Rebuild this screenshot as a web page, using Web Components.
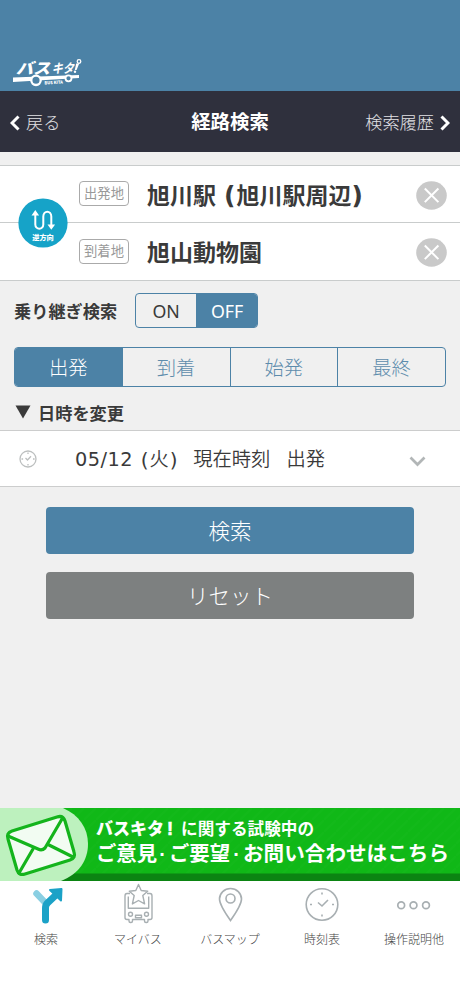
<!DOCTYPE html>
<html lang="ja">
<head>
<meta charset="utf-8">
<title>経路検索</title>
<style>
html,body{margin:0;height:100%}
body{font-family:"DejaVu Sans","Noto Sans CJK JP",sans-serif;background:#f0f0f0;color:#3a3a3a;overflow:hidden}
</style>
</head>
<body>
<route-app></route-app>
<script>
function define(name, html, setup) {
  const t = document.createElement('template');
  t.innerHTML = html;
  customElements.define(name, class extends HTMLElement {
    connectedCallback() {
      if (this.shadowRoot) return;
      this.attachShadow({mode:'open'}).appendChild(t.content.cloneNode(true));
      if (setup) setup(this, this.shadowRoot);
    }
  });
}

define('app-header', `
<style>:host{display:block;height:91px;background:#4c82a6;flex:none}
svg{display:block}</style>
<svg width="460" height="91" viewBox="0 0 460 91" fill="#fff">
<g font-family="Noto Sans CJK JP,sans-serif" font-weight="900">
<text transform="translate(16 73.5) skewX(-16)" font-size="15.5" textLength="34" lengthAdjust="spacingAndGlyphs">バス</text>
<text transform="translate(51.500 73) skewX(-16)" font-size="13" font-weight="700" textLength="22" lengthAdjust="spacingAndGlyphs">キタ</text>
<text transform="translate(44.5 84.5) rotate(-3)" font-size="4.2" textLength="18.5" lengthAdjust="spacingAndGlyphs">BUS KITA</text></g>
<path d="M13 77.500 79 75v3L13 82z"/>
<circle cx="36" cy="80.300" r="4.700" fill="#4c82a6" stroke="#fff" stroke-width="2.300"/>
<circle cx="68.500" cy="78.300" r="3" fill="#4c82a6" stroke="#fff" stroke-width="1.800"/>
<path d="M76.200 63.500h3l-2.600 6.500h-1.800z"/><circle cx="75" cy="71.800" r="1.200"/>
<circle cx="79" cy="61.500" r="1.800" fill="none" stroke="#fff" stroke-width="1.300"/>
</svg>`);

define('nav-bar', `
<style>:host{display:grid;grid-template-columns:1fr auto 1fr;align-items:center;height:61px;background:#2f303d;color:#e2e2e6;padding:2px 10px 0;flex:none;box-sizing:border-box}
div{display:flex;align-items:center;font-size:17.2px;font-weight:300;line-height:24px}
.r{justify-content:flex-end}h1{margin:0;font-size:19.4px;font-weight:700;color:#fff;line-height:28px}
svg{width:10px;height:16px;fill:none;stroke:#fff;stroke-width:3;margin-top:1px}.l svg{margin-right:6px}.r svg{margin-left:6px}</style>
<div class="l"><svg viewBox="0 0 10 16"><path d="M8.5 1.5 2 8l6.5 6.5"/></svg><slot name="back"></slot></div>
<h1><slot></slot></h1>
<div class="r"><slot name="next"></slot><svg viewBox="0 0 10 16"><path d="M1.5 1.5 8 8l-6.5 6.5"/></svg></div>`);

define('stop-row', `
<style>:host{display:flex;align-items:center;height:56px;padding:0 13px 0 79px}
:host([slot=to]){height:57px}
.tag{box-sizing:border-box;width:50px;height:25px;border:1.5px solid #aaa;border-radius:4px;color:#999;font-size:13.3px;line-height:24px;text-align:center;margin-top:-1px;white-space:nowrap}
.name{flex:1;margin-left:18px;font-weight:700;font-size:23px;line-height:30px;white-space:pre;margin-top:3px}
svg{width:31px;height:29px;margin-top:2px}</style>
<span class="tag"></span><span class="name"><slot></slot></span>
<svg viewBox="0 0 31 29"><ellipse cx="15.5" cy="14.5" rx="15.3" ry="14.2" fill="#c9c9c9"/><path d="m8.8 7.5 13.6 13.6M22.4 7.5 8.8 21.1" stroke="#fff" stroke-width="2"/></svg>`,
(el, r) => r.querySelector('.tag').textContent = el.getAttribute('tag'));

define('stop-panel', `
<style>:host{display:block;position:relative;background:#fff;border:solid #c9cccc;border-width:1px 0;flex:none}
.line{height:1px;background:#c9cccc}
svg{position:absolute;left:18px;top:32px}</style>
<slot name="from"></slot><div class="line"></div><slot name="to"></slot>
<svg width="50" height="50" viewBox="0 0 50 50"><circle cx="25" cy="25" r="24.6" fill="#16a3c8"/>
<g fill="none" stroke="#fff" stroke-width="2"><path d="M17.300 16v10.500c0 5.500 8 5.500 8 0V18.500c0-6.500 8-6.500 8 0V27"/></g>
<path d="M13.5 17.500 17.3 12l3.8 5.500zM29.5 26.500h7.600l-3.800 5.200z" fill="#fff"/>
<text x="25" y="42.300" text-anchor="middle" font-family="Noto Sans CJK JP,sans-serif" font-weight="900" font-size="7.200" fill="#fff">逆方向</text></svg>`);

define('seg-control', `
<style>:host{display:flex;box-sizing:border-box;border:1.5px solid #4c82a6;border-radius:4px;overflow:hidden}
span{flex:1;display:flex;align-items:center;justify-content:center;font-size:19.3px;font-weight:300;color:#5d8cac}
:host([plain]) span{font:400 17.8px "Noto Sans",sans-serif;color:#3a3a3a}
span+span{border-left:1px solid #4c82a6}
span.on,:host([plain]) span.on{background:#4c82a6;color:#fff}</style>`,
(el, r) => el.getAttribute('items').split(',').forEach((s, i) => {
  const n = document.createElement('span'); n.textContent = s;
  if (i === +el.getAttribute('active')) n.className = 'on';
  r.appendChild(n);
}));

define('date-row', `
<style>:host{display:flex;align-items:center;box-sizing:border-box;height:57px;background:#fff;border:solid #cccdcd;border-width:1px 0;padding:0 34px 0 19px;font-size:19.3px;flex:none}
.t{flex:1;display:flex;margin:3px 0 0 38px;line-height:28px;white-space:pre;font-weight:350}
svg{fill:none;stroke:#bcbfbf}</style>
<svg width="18" height="18" viewBox="0 0 18 18" stroke-width="1.3"><circle cx="9" cy="9" r="8"/><path d="m6.5 8 2 2L12 6.3M9 2.5v1.6M9 14v1.6M2.5 9h1.6M14 9h1.6"/></svg>
<span class="t"><slot></slot></span>
<svg width="17" height="11" viewBox="0 0 17 11" stroke-width="2.7" style="stroke:#b2b6b7;margin-top:5px"><path d="m1.5 1.5 7 7 7-7"/></svg>`);

define('action-button', `
<style>:host{display:flex;align-items:center;justify-content:center;height:47px;margin:0 46px;border-radius:4px;background:var(--fill);color:#fff;font-size:21.5px;font-weight:300;flex:none;box-sizing:border-box;padding-bottom:2px}</style><slot></slot>`);

define('contact-banner', `
<style>:host{display:block;height:73px;flex:none}svg{display:block}</style>
<svg width="460" height="73" viewBox="0 0 460 73">
<defs><pattern id="p" width="12" height="12" patternUnits="userSpaceOnUse"><path d="M0 12 12 0" stroke="#1cbd24" stroke-width="2"/></pattern></defs>
<path fill="#10b817" d="M0 0h460v73H0z"/><path fill="url(#p)" opacity=".25" d="M0 0h460v65H0z"/><path fill="#0b8412" d="M0 65.500h460V73H0z"/>
<path fill="#bdf1be" d="M0 0h63c16 7 25 20 25 36S79 66 61 73H0z"/>
<g stroke="#14b41c" stroke-width="3.200" stroke-linejoin="round" stroke-linecap="round" fill="#f2fcf2">
<path d="M12 23 57 9q6-2 8 4l9 31q2 6-4 8L25 66q-6 2-8-4L8 31q-2-6 4-8z"/>
<path fill="none" d="m8 28 30 13q4 2 7-1l17-29M33 41 19 65M49 37l24 12"/></g>
<g fill="#fff" font-family="Liberation Sans,Noto Sans CJK JP,sans-serif" font-weight="700">
<text x="96" y="27" font-size="17" font-weight="900" textLength="68" lengthAdjust="spacingAndGlyphs">バスキタ</text>
<text x="167" y="27" font-size="18" stroke="#fff" stroke-width=".7">!</text>
<text x="181" y="27" font-size="16.500" textLength="133" lengthAdjust="spacingAndGlyphs">に関する試験中の</text>
<text x="96" y="52.500" font-size="20.500" textLength="61" lengthAdjust="spacingAndGlyphs">ご意見</text>
<text x="162.700" y="52.500" font-size="20" text-anchor="middle">·</text>
<text x="169" y="52.500" font-size="20.500" textLength="61" lengthAdjust="spacingAndGlyphs">ご要望</text>
<text x="236.500" y="52.500" font-size="20" text-anchor="middle">·</text>
<text x="243" y="52.500" font-size="20.500" textLength="206" lengthAdjust="spacingAndGlyphs">お問い合わせはこちら</text></g></svg>`);

define('tab-item', `
<style>:host{flex:1 1 0;display:flex;flex-direction:column;align-items:center;font-size:12px;font-weight:300;color:#444;line-height:18px;white-space:nowrap}
::slotted(svg){display:block;width:44px;height:44px;fill:none;stroke:#a8afb2;stroke-width:1.6}
span{margin-top:6px}</style><slot name="icon"></slot><span><slot></slot></span>`);

define('tab-bar', `
<style>:host{display:flex;background:#fff;flex:1}</style>
<tab-item><svg slot="icon" viewBox="0 0 44 44"><path d="M12.500 12.500 22 22.500" stroke="#8acfe2" stroke-width="6.500" stroke-linecap="round"/><path d="M21.500 39V27q0-3 2-5l9.500-9" stroke="#1ba2c7" stroke-width="7" stroke-linecap="round"/><path d="m26 9 11.500-1L37 19.500z" fill="#1ba2c7" stroke="#1ba2c7" stroke-linejoin="round" stroke-width="2"/></svg>検索</tab-item>
<tab-item><svg slot="icon" viewBox="0 0 44 44" style="stroke-width:1.400"><g stroke-linejoin="round"><path d="m22.500 3.500 2.700 6 6.500.7-4.900 4.300 1.800 8.400-6.100-3.400-6.100 3.400 1.800-8.400-4.900-4.300 6.500-.7z"/><path d="M14 12.500h-3q-2 0-2 2.500v21.500q0 2 2 2h2v1.500q0 1.500 1.500 1.500h.5q1.500 0 1.500-1.500v-1.500h12v1.500q0 1.500 1.500 1.500h.5q1.500 0 1.500-1.500v-1.500h2q2 0 2-2V15q0-2.500-2-2.500h-3M12.300 15.500v11.700h20.400V15.500"/><circle cx="14.500" cy="33.300" r="2"/><circle cx="30.500" cy="33.300" r="2"/><path d="M19.500 34.300h6v2.500h-6z"/></g></svg>マイバス</tab-item>
<tab-item><svg slot="icon" viewBox="0 0 44 44"><path d="M22.500 39.500Q11.500 24 11.500 18a11 10.500 0 0 1 22 0q0 6-11 21.500z"/><circle cx="22.500" cy="17.500" r="4.500"/></svg>バスマップ</tab-item>
<tab-item><svg slot="icon" viewBox="0 0 44 44"><circle cx="22" cy="23.500" r="15.800"/><path d="m18 21.500 4 3.500 6-6M22 11.500v2M22 33.500v2M10 23.500h2M32 23.500h2"/></svg>時刻表</tab-item>
<tab-item><svg slot="icon" viewBox="0 0 44 44" style="stroke-width:1.700"><circle cx="9.200" cy="24.300" r="3.400"/><circle cx="21.500" cy="24.300" r="3.400"/><circle cx="34" cy="24.300" r="3.400"/></svg>操作説明他</tab-item>`);

define('route-app', `
<style>:host{display:flex;flex-direction:column;height:996px;width:460px}
stop-panel{margin-top:13px}
.transfer{display:flex;align-items:center;height:35px;margin:12px 14px 0;font-weight:700;font-size:17.2px}
.transfer>span{margin-top:-1px}
.transfer seg-control{width:123px;height:35px;margin-left:18px}
.types{height:40px;margin:19px 14px 0;flex:none}
.change{height:43px;display:flex;align-items:center;padding:7px 15px 0;font-weight:700;font-size:17.2px;box-sizing:border-box;flex:none}
.change svg{margin-right:7px}
.search{margin-top:19.5px;--fill:#4c82a6}.reset{margin-top:18px;--fill:#7d8080}
contact-banner{margin-top:189.5px}
.p{display:inline-block;text-align:center;font-weight:inherit}
stop-row .p{width:12.500px;font-size:25px;text-align:left;line-height:20px}date-row .p{width:9.500px;font-weight:400;font-size:20px}.d{width:65px;font-weight:400;letter-spacing:.5px}</style>
<app-header></app-header>
<nav-bar><span slot="back">戻る</span>経路検索<span slot="next">検索履歴</span></nav-bar>
<stop-panel>
<stop-row slot="from" tag="出発地">旭川駅 <span class="p">(</span>旭川駅周辺<span class="p">)</span></stop-row>
<stop-row slot="to" tag="到着地">旭山動物園</stop-row>
</stop-panel>
<div class="transfer"><span>乗り継ぎ検索</span><seg-control plain items="ON,OFF" active="1"></seg-control></div>
<seg-control class="types" items="出発,到着,始発,最終" active="0"></seg-control>
<div class="change"><svg width="16" height="14"><path d="M.5.5h15L8 13.500z" fill="#3a3a3a"/></svg>日時を変更</div>
<date-row><span class="d">05/12</span><span class="p">(</span><span>火</span><span class="p">)</span><span style="margin-left:15px">現在時刻</span><span style="margin-left:16px">出発</span></date-row>
<action-button class="search">検索</action-button>
<action-button class="reset">リセット</action-button>
<contact-banner></contact-banner>
<tab-bar></tab-bar>`);
</script>
</body>
</html>
